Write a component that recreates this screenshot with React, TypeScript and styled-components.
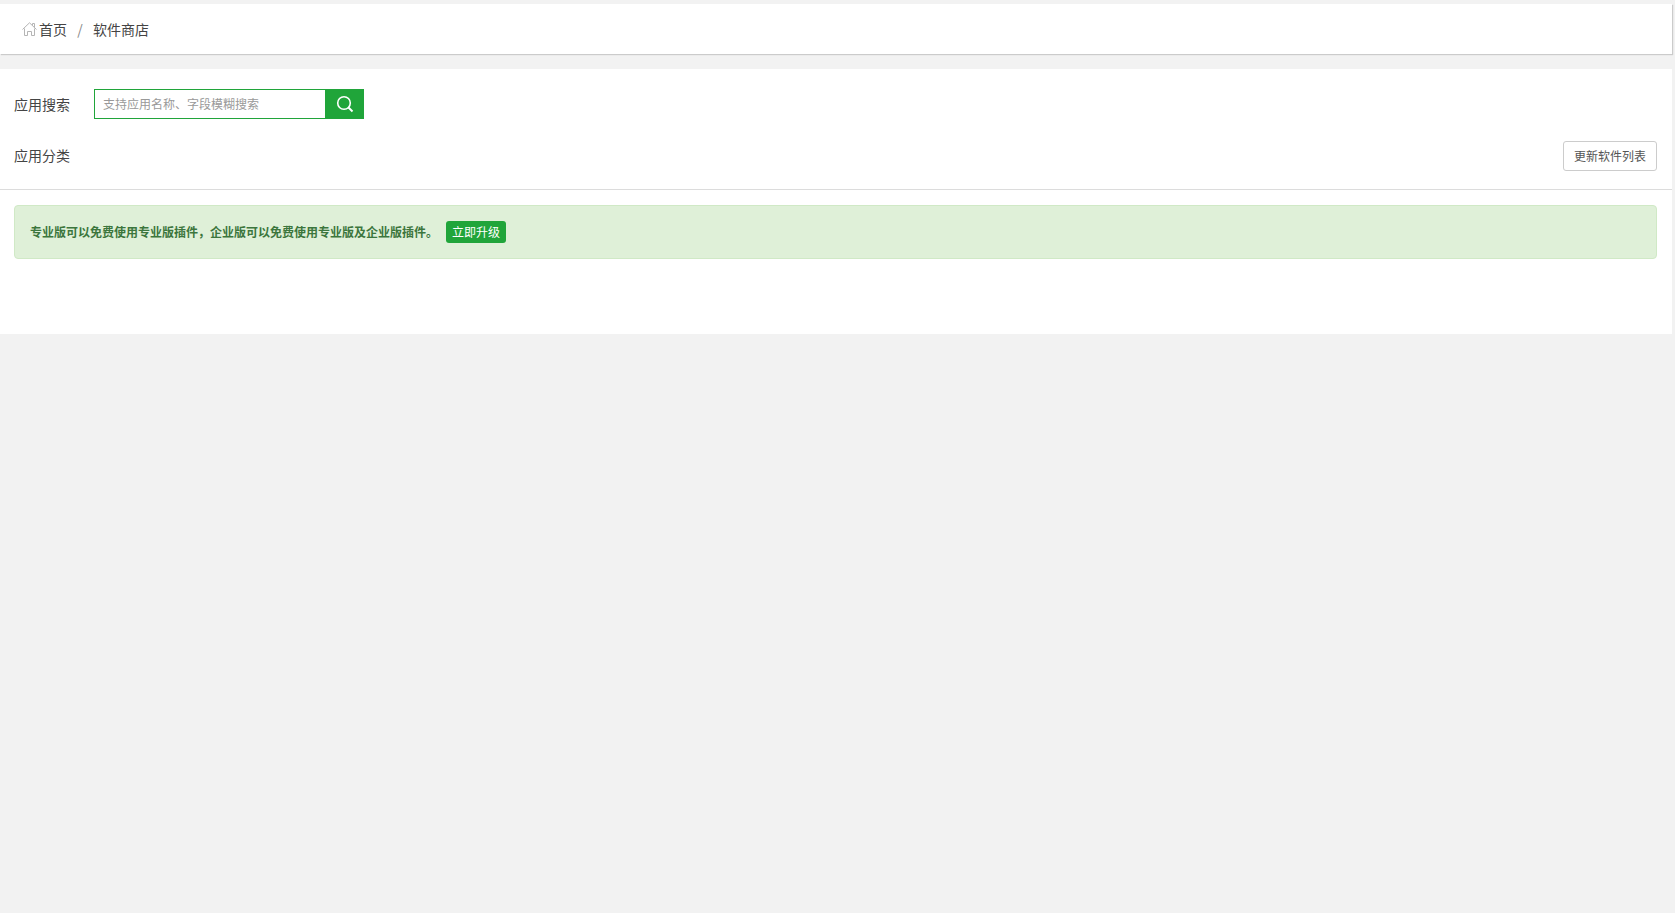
import React from "react";
import styled, { createGlobalStyle } from "styled-components";

const GlobalStyle = createGlobalStyle`
  * { box-sizing: border-box; }
  body {
    margin: 0;
    background: #f2f2f2;
    color: #444;
    font: 12px/18px "Noto Sans CJK SC", sans-serif;
  }
  button, input { font: inherit; }
`;

const Page = styled.div`
  padding: 4px 3px 0 0;
`;

const TopBar = styled.nav`
  display: flex;
  align-items: center;
  height: 50px;
  margin-bottom: 15px;
  padding-left: 22px;
  background: #fff;
  box-shadow: 1px 1px 1px rgba(0, 0, 0, 0.16);
  font-size: 14px;
  line-height: 20px;
`;

const Crumb = styled.a`
  display: flex;
  align-items: center;
  gap: 2px;
  color: #444;
  text-decoration: none;
`;

const Slash = styled.span`
  width: 26px;
  text-align: center;
  color: #888;
`;

const Panel = styled.main`
  min-height: 265px;
  padding-top: 20px;
  background: #fff;
`;

const Filters = styled.section`
  display: grid;
  gap: 20px;
  padding-bottom: 18px;
  border-bottom: 1px solid #dcdcdc;
`;

const FilterRow = styled.div<{ $height: number }>`
  display: flex;
  align-items: center;
  height: ${({ $height }) => $height}px;
  padding: 0 15px 0 14px;
`;

const RowLabel = styled.label`
  width: 80px;
  font-size: 14px;
  line-height: 20px;
`;

const SearchForm = styled.form`
  display: flex;
  width: 270px;
  height: 30px;
`;

const SearchInput = styled.input`
  flex: 1;
  min-width: 0;
  padding: 0 8px;
  border: 1px solid #20a53a;
  border-right: 0;
  border-radius: 0;
  background: #fff;
  outline: none;
  &::placeholder { color: #999; opacity: 1; }
`;

const SearchButton = styled.button`
  display: flex;
  align-items: center;
  justify-content: center;
  width: 39px;
  padding: 0;
  border: 0;
  background: #20a53a;
  cursor: pointer;
`;

const UpdateButton = styled.button`
  align-self: flex-end;
  width: 94px;
  height: 30px;
  margin-left: auto;
  padding: 0;
  border: 1px solid #ccc;
  border-radius: 3px;
  background: #fff;
  color: #555;
  cursor: pointer;
`;

const Notice = styled.aside`
  display: flex;
  align-items: center;
  gap: 8px;
  min-height: 54px;
  margin: 15px 15px 0 14px;
  padding: 0 15px;
  border: 1px solid #d0e9c6;
  border-radius: 4px;
  background: #dff0d8;
  color: #3c763d;
`;

const UpgradeButton = styled.button`
  width: 60px;
  height: 22px;
  padding: 0;
  border: 0;
  border-radius: 3px;
  background: #20a53a;
  color: #fff;
  cursor: pointer;
`;

const HomeIcon = () => (
  <svg width="15" height="16" viewBox="0 0 15 16" fill="none" stroke="#b5b5b5" aria-hidden="true">
    <path d="M.5 8.5 7.5 1.8l7 6.7M2.5 7.5v7h3v-4h4v4h3v-7M10.5 4.5v-2h2v4" />
  </svg>
);

const SearchIcon = () => (
  <svg width="18" height="18" viewBox="0 0 18 18" fill="none" stroke="#fff" aria-hidden="true">
    <circle cx="8" cy="8" r="6.3" strokeWidth="1.6" />
    <path d="m12.5 12.5 4 4" strokeWidth="2" />
  </svg>
);

export default function App() {
  return (
    <>
      <GlobalStyle />
      <Page>
        <TopBar>
          <Crumb href="#home"><HomeIcon />首页</Crumb>
          <Slash>/</Slash>
          <Crumb href="#store">软件商店</Crumb>
        </TopBar>
        <Panel>
          <Filters>
            <FilterRow $height={30}>
              <RowLabel htmlFor="search">应用搜索</RowLabel>
              <SearchForm onSubmit={(event) => event.preventDefault()}>
                <SearchInput id="search" type="text" placeholder="支持应用名称、字段模糊搜索" />
                <SearchButton type="submit" aria-label="搜索"><SearchIcon /></SearchButton>
              </SearchForm>
            </FilterRow>
            <FilterRow $height={32}>
              <RowLabel as="span">应用分类</RowLabel>
              <UpdateButton type="button">更新软件列表</UpdateButton>
            </FilterRow>
          </Filters>
          <Notice>
            <strong>专业版可以免费使用专业版插件，企业版可以免费使用专业版及企业版插件。</strong>
            <UpgradeButton type="button">立即升级</UpgradeButton>
          </Notice>
        </Panel>
      </Page>
    </>
  );
}
